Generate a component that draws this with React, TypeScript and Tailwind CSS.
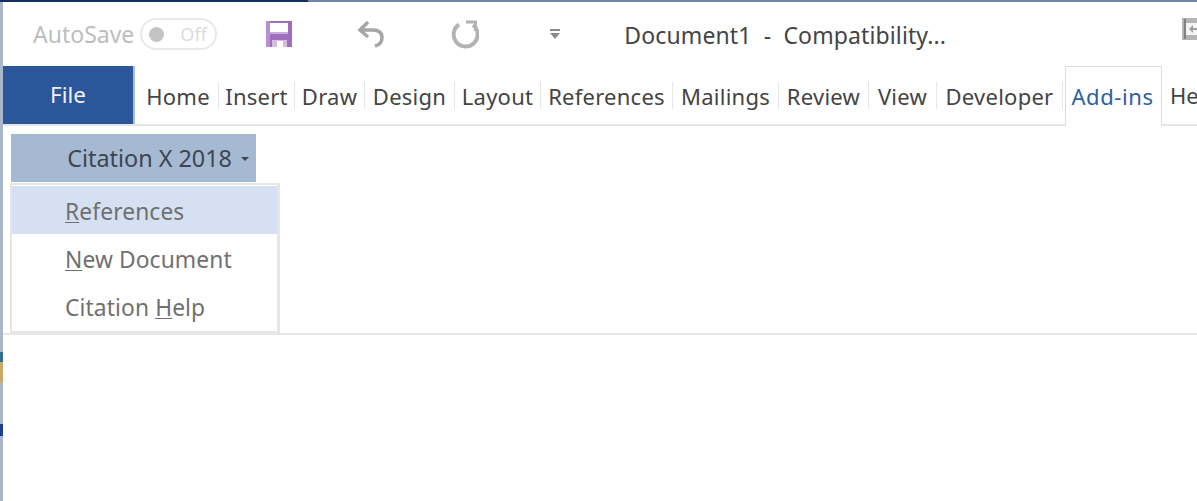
import React from "react";

const tabs = [
  { label: "Home", w: "w-[81px]" },
  { label: "Insert", w: "w-[76px]" },
  { label: "Draw", w: "w-[70px]" },
  { label: "Design", w: "w-[90px]" },
  { label: "Layout", w: "w-[86px]" },
  { label: "References", w: "w-[132px]" },
  { label: "Mailings", w: "w-[106px]" },
  { label: "Review", w: "w-[90px]" },
  { label: "View", w: "w-[68px]" },
  { label: "Developer", w: "w-[126px]" },
];

const SaveIcon = () => (
  <svg width="26" height="26" viewBox="0 0 26 26">
    <path d="M0 0H26V26H0Z" fill="#a06fbb" />
    <path d="M0 0H4V26H0Z" fill="#b88fd0" />
    <path d="M4 2H22V11H4Z" fill="#fff" />
    <path d="M4 11H22V13H4Z" fill="#c9aedb" />
    <path d="M6 19H21V26H6Z" fill="#d3bde2" />
    <path d="M11 20H17V26H11Z" fill="#fff" />
  </svg>
);

const UndoIcon = () => (
  <svg width="28" height="28" viewBox="0 0 28 28" fill="none" stroke="#a6a6a6" strokeWidth="3.5">
    <path d="M11 2L3 10L11 17" />
    <path d="M3 10H16C22 10 25 13 25 18C25 22 22 25 18 26" />
  </svg>
);

const RedoIcon = () => (
  <svg width="30" height="30" viewBox="0 0 30 30" fill="none" stroke="#b3b3b3" strokeWidth="4">
    <path d="M10 5.5A12 12 0 1 0 24 6" />
    <path d="M17 3H26.5V12" strokeWidth="3" />
  </svg>
);

const ShareIcon = () => (
  <svg width="15" height="22" viewBox="0 0 15 22" className="shrink-0">
    <path d="M0 0H15V22H0Z" fill="#b5b5b5" />
    <path d="M2 1H4V21H2Z" fill="#808080" />
    <path d="M4 5H15V17H4Z" fill="#f4f4f4" />
    <path d="M7 11L11 7V10H15V12H11V15Z" fill="#a0a0a0" />
  </svg>
);

const Toggle = () => (
  <div className="flex h-[32px] w-[77px] items-center rounded-full border-2 border-[#e8e8e8] pl-[7px]">
    <span className="h-[15px] w-[15px] rounded-full bg-[#c4c4c4]" />
    <span className="ml-[16px] text-[18px] text-[#dcdcdc]">Off</span>
  </div>
);

const Item = ({ first, rest, pre, active }: { first: string; rest: string; pre?: string; active?: boolean }) => (
  <div className={`h-[48px] whitespace-pre pl-[53px] text-[22.8px] leading-[52px] tracking-[0.1px] text-[#707070] ${active ? "bg-[#d5e1f2]" : ""}`}>
    {pre}
    <span className="underline decoration-1 underline-offset-2">{first}</span>
    {rest}
  </div>
);

export default function App() {
  return (
    <div className="flex h-[501px] w-[1197px] flex-col overflow-hidden bg-white font-['Noto_Sans','Open_Sans',sans-serif]">
      <div className="h-[2px] shrink-0 bg-[linear-gradient(90deg,#14305f_0,#14305f_308px,#6f85a8_308px,#6f85a8_100%)]" />
      <div className="flex flex-1">
        <div className="w-[3px] shrink-0 bg-[linear-gradient(180deg,#a9b6cc_0,#a9b6cc_350px,#2f6f8c_350px,#2f6f8c_360px,#c8aa6a_360px,#c8aa6a_381px,#a9b6cc_381px,#a9b6cc_422px,#1d3f8f_422px,#1d3f8f_434px,#a9b6cc_434px)]" />
        <div className="flex min-w-0 flex-1 flex-col">
          <div className="flex h-[64px] shrink-0 items-center text-[#a8a8a8]">
            <span className="ml-[30px] text-[23px] leading-none text-[#bdbdbd]">AutoSave</span>
            <div className="ml-[6px]"><Toggle /></div>
            <div className="ml-[49px]"><SaveIcon /></div>
            <div className="ml-[65px]"><UndoIcon /></div>
            <div className="ml-[64px]"><RedoIcon /></div>
            <div className="ml-[71px] flex flex-col items-center gap-[2px]">
              <span className="h-[2px] w-[10px] bg-[#8a8a8a]" />
              <span className="h-0 w-0 border-x-[5px] border-t-[6px] border-x-transparent border-t-[#8a8a8a]" />
            </div>
            <span className="ml-[64px] mt-[2px] whitespace-pre text-[23px] tracking-[0.12px] text-[#444444]">Document1  -  Compatibility...</span>
            <div className="ml-auto -mt-[10px]"><ShareIcon /></div>
          </div>
          <div className="flex h-[60px] shrink-0 border-b-2 border-[#e6e6e6]">
            <div className="flex w-[130px] shrink-0 items-center justify-center bg-[#2b579a] text-[22.5px] text-[#eef2f8] shadow-[2px_0_0_#a9bcd8]">File</div>
            <div className="flex pl-[5px]">
              {tabs.map((tab) => (
                <div key={tab.label} className={`flex shrink-0 items-center justify-center ${tab.w}`}>
                  <span className="mt-[1px] flex h-[27px] w-full items-center justify-center border-r border-[#e6e6e6] text-[22px] leading-none tracking-[0.25px] text-[#444444]">{tab.label}</span>
                </div>
              ))}
              <div className="-mb-[2px] ml-[2px] flex h-[60px] w-[97px] shrink-0 items-center justify-center border-x border-t border-[#dedede] bg-white pr-[2px] text-[22px] tracking-[0.6px] text-[#2f5ea3]">Add-ins</div>
              <span className="ml-[8px] flex items-center text-[22px] text-[#444444]">He</span>
            </div>
          </div>
          <div className="relative h-[209px] shrink-0 border-b-2 border-[#e6e6e6]">
            <div className="ml-[8px] mt-[8px] flex h-[48px] w-[245px] items-center justify-end gap-[9px] bg-[#a5b9d2] pr-[7px] pt-[2px] text-[23.4px] text-[#3d4651]">
              Citation X 2018
              <span className="h-0 w-0 border-x-[4px] border-t-[4px] border-x-transparent border-t-[#3d4651]" />
            </div>
            <div className="absolute left-[7px] top-[57px] w-[270px] border-2 border-r-[3px] border-b-[3px] border-[#e6e6e6] bg-white pt-[1px] pb-[1px]">
              <Item first="R" rest="eferences" active />
              <Item first="N" rest="ew Document" />
              <Item pre="Citation " first="H" rest="elp" />
            </div>
          </div>
        </div>
      </div>
    </div>
  );
}
